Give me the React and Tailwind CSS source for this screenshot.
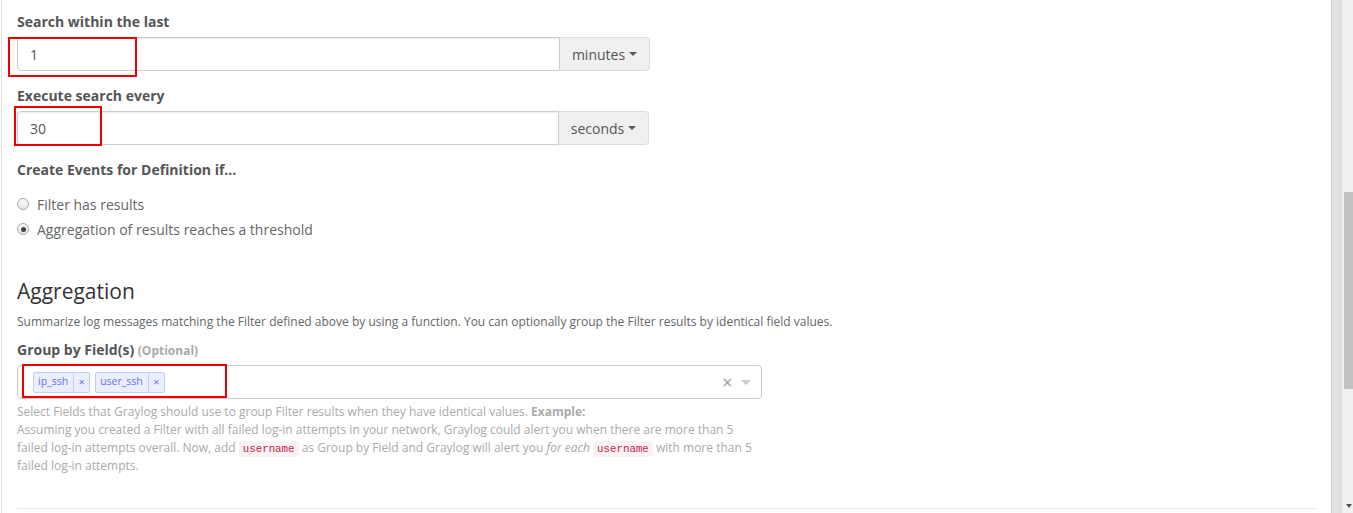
import React from "react";

function Caret({ color = "border-t-[#555]" }) {
  return (
    <span
      className={`ml-[4px] inline-block h-0 w-0 border-x-[4px] border-t-[4px] border-x-transparent ${color} align-middle`}
    />
  );
}

function RedBox({ className }) {
  return <div className={`pointer-events-none absolute border-2 border-[#ee0000] ${className}`} />;
}

function TimeInput({ value, unit, width, box }) {
  return (
    <div className={`relative flex ${width}`}>
      <div className="flex h-[34px] flex-1 items-center rounded-l-[4px] border border-[#ccc] bg-white px-[12px] text-[14px] text-[#555] shadow-[inset_0_1px_1px_rgba(0,0,0,0.075)]">
        {value}
      </div>
      <button className="flex h-[34px] w-[90px] items-center justify-center rounded-r-[4px] border border-l-0 border-[#ddd] bg-[#f0f0f0] text-[14px] text-[#555]">
        {unit}
        <Caret />
      </button>
      <RedBox className={box} />
    </div>
  );
}

function Radio({ checked, label }) {
  return (
    <div className="flex h-[20px] items-center">
      <span className="flex h-[12px] w-[12px] items-center justify-center rounded-full border border-[#aaa] bg-gradient-to-b from-[#fafafa] to-[#e6e6e6]">
        {checked && <span className="h-[5px] w-[5px] rounded-full bg-[#444]" />}
      </span>
      <span className="ml-[8px] text-[14px] text-[#666]">{label}</span>
    </div>
  );
}

function Tag({ label }) {
  return (
    <span className="flex h-[21px] items-stretch rounded-[2px] border border-[#c6cdf6] bg-[#ebeefd] text-[10.5px] text-[#6472f0]">
      <span className="flex items-center pl-[4px] pr-[5px]">{label}</span>
      <span className="flex w-[16px] items-center justify-center border-l border-[#c6cdf6] text-[11px]">×</span>
    </span>
  );
}

function Code({ children }) {
  return (
    <code className="rounded-[4px] bg-[#f9f2f4] px-[4px] py-[2px] font-['Liberation_Mono',monospace] text-[10.8px] leading-[12px] text-[#c7254e]">
      {children}
    </code>
  );
}

export default function App() {
  return (
    <div className="flex h-[513px] w-[1353px] overflow-hidden bg-white font-['Open_Sans',sans-serif] text-[14px] text-[#666]">
      <div className="ml-[1px] flex w-[1331px] flex-col border-x border-l-[#ddd] border-r-[#d0d0d0] bg-white pl-[15px] pr-[14px] pt-[12px]">
        <label className="mb-[5px] block font-bold leading-[20px] text-[#555]">Search within the last</label>
        <TimeInput value="1" unit="minutes" width="w-[633px]" box="-left-[9px] top-0 h-[40px] w-[129px]" />

        <label className="mb-[5px] mt-[15px] block font-bold leading-[20px] text-[#555]">Execute search every</label>
        <TimeInput value="30" unit="seconds" width="w-[632px]" box="-left-[3px] -top-[5px] h-[40px] w-[88px]" />

        <label className="mt-[15px] block font-bold leading-[20px] text-[#555]">Create Events for Definition if...</label>
        <div className="mt-[14px] flex flex-col gap-[5px]">
          <Radio label="Filter has results" />
          <Radio checked label="Aggregation of results reaches a threshold" />
        </div>

        <h2 className="mt-[39px] text-[21px] leading-[26px] text-[#333]">Aggregation</h2>
        <p className="mt-[9px] text-[12px] leading-[18px] text-[#666]">
          Summarize log messages matching the Filter defined above by using a function. You can optionally group the
          Filter results by identical field values.
        </p>

        <label className="mb-[4px] mt-[9px] block leading-[20px]">
          <span className="font-bold text-[#555]">Group by Field(s)</span>{" "}
          <span className="text-[12px] font-bold text-[#aaa]">(Optional)</span>
        </label>
        <div className="relative flex h-[34px] w-[745px] items-center rounded-[4px] border border-[#ccc] bg-white pl-[15px]">
          <div className="flex gap-[5px]">
            <Tag label="ip_ssh" />
            <Tag label="user_ssh" />
          </div>
          <div className="ml-auto flex h-full items-center">
            <span className="flex w-[17px] justify-center text-[18px] leading-none text-[#999]">×</span>
            <span className="flex w-[25px] justify-center pr-[5px]">
              <span className="h-0 w-0 border-x-[5px] border-t-[5px] border-x-transparent border-t-[#ccc]" />
            </span>
          </div>
          <RedBox className="left-[4px] -top-[2px] h-[34px] w-[205px]" />
        </div>

        <p className="mt-[4px] w-[745px] text-[12px] leading-[18px] text-[#aaa]">
          Select Fields that Graylog should use to group Filter results when they have identical values.{" "}
          <b>Example:</b>
          <br />
          Assuming you created a Filter with all failed log-in attempts in your network, Graylog could alert you when
          there are more than 5 failed log-in attempts overall. Now, add <Code>username</Code> as Group by Field and
          Graylog will alert you <em>for each</em> <Code>username</Code> with more than 5 failed log-in attempts.
        </p>

        <hr className="mt-[33px] border-t border-[#e5e5e5]" />
      </div>

      <div className="w-[10px] bg-[#e0e0e0]" />

      <div className="flex w-[11px] flex-col bg-[#f0f0f0]">
        <div className="h-[192px]" />
        <div className="ml-[2px] h-[197px] bg-[#c1c1c1]" />
        <div className="flex-1" />
        <div className="mb-[5px] ml-[4px] h-0 w-0 border-x-[3px] border-t-[4px] border-x-transparent border-t-[#505050]" />
      </div>
    </div>
  );
}
